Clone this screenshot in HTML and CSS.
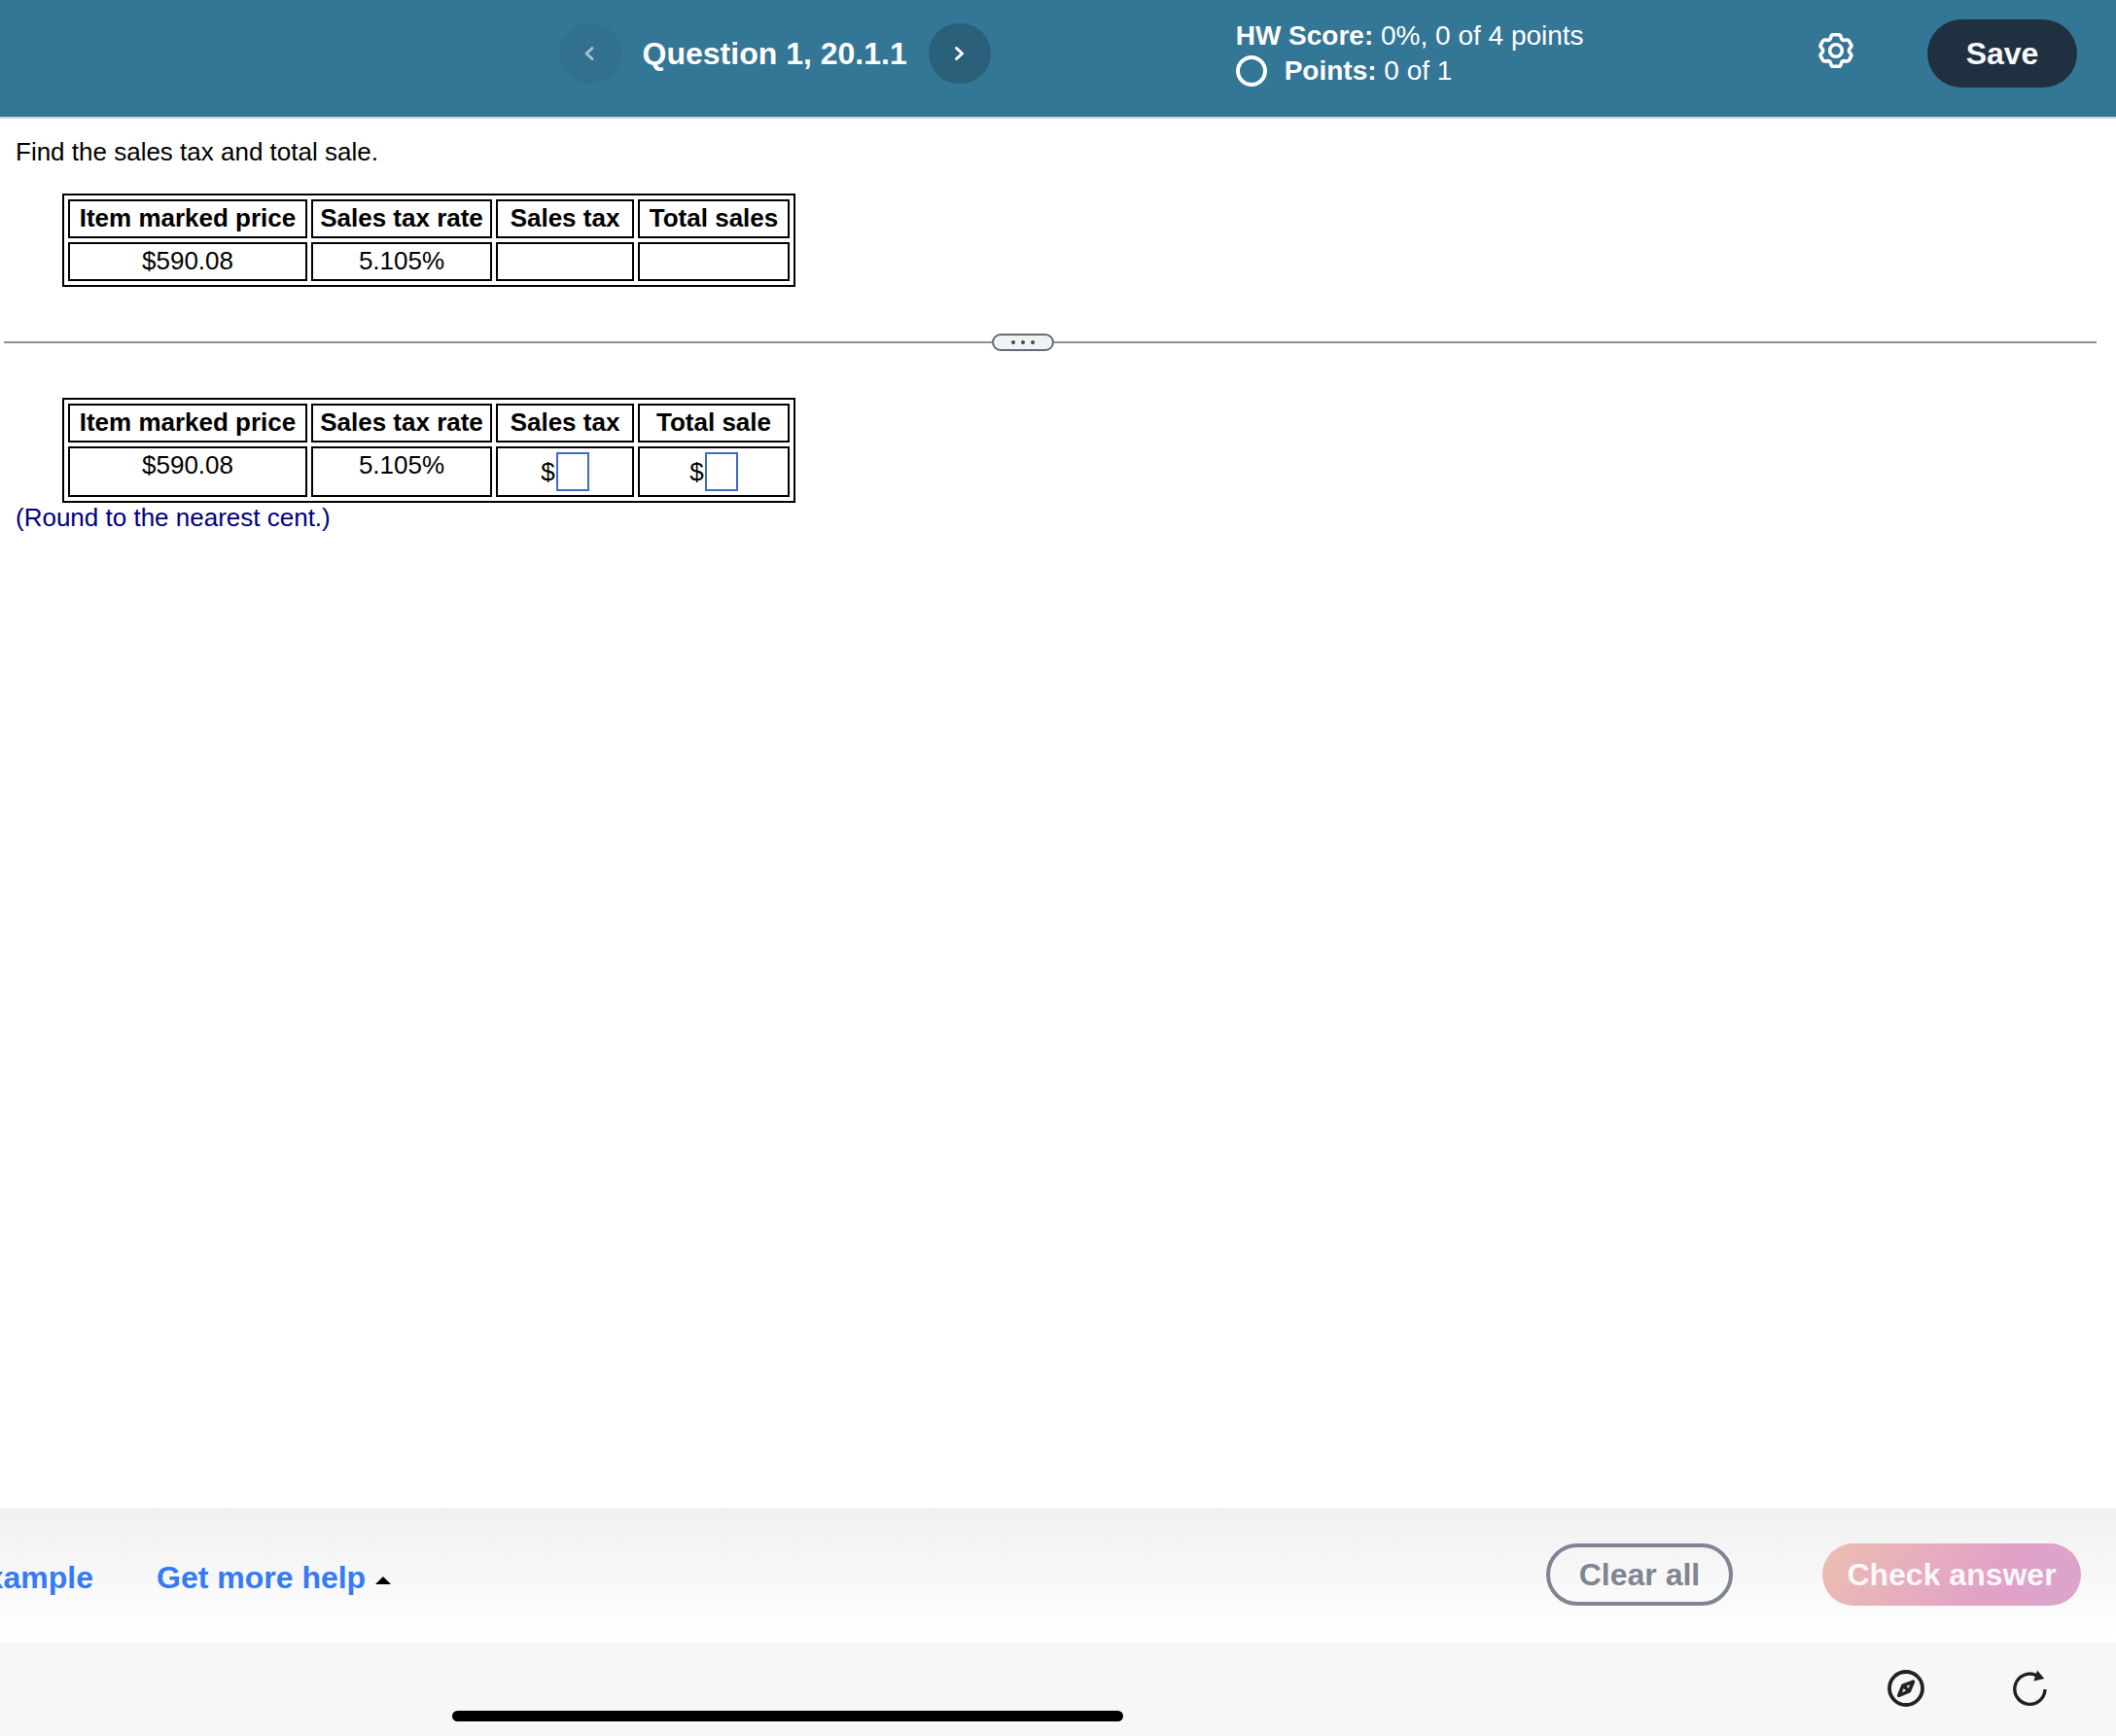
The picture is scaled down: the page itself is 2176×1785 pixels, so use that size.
FILE: index.html
```html
<!DOCTYPE html>
<html lang="en">
<head>
<meta charset="utf-8">
<title>Question 1, 20.1.1</title>
<link rel="stylesheet" href="styles.css">
</head>
<body>
<header class="topbar">
  <nav class="pager" aria-label="Questions">
    <button class="pager-btn" type="button" aria-label="Previous question" disabled>
      <svg width="14" height="18" viewBox="0 0 14 18"><path d="M9 3.500 3 9l6 5.500"/></svg>
    </button>
    <h1 class="title">Question 1, 20.1.1</h1>
    <button class="pager-btn" type="button" aria-label="Next question">
      <svg width="14" height="18" viewBox="0 0 14 18"><path d="M3.500 3.500 9.500 9l-6 5.500"/></svg>
    </button>
  </nav>
  <div class="score">
    <div><b>HW Score:</b> 0%, 0 of 4 points</div>
    <div class="points"><span class="ring"></span><span><b>Points:</b> 0 of 1</span></div>
  </div>
  <button class="icon-btn settings" type="button" aria-label="Settings">
    <svg width="36" height="36" viewBox="0 0 36 36" fill="none" stroke="#fff" stroke-width="3.600">
      <path d="M18 1.800H21Q22.600 1.800 23 3.500L23.600 5.400Q24.300 7.400 26.400 7.400L29 7Q30.600 6.800 31.400 8.200L33.600 12Q34.300 13.300 33.400 14.500L31.800 16.400Q31 18 31.800 19.600L33.400 21.500Q34.300 22.700 33.600 24L31.400 27.800Q30.600 29.200 29 29L26.400 28.600Q24.300 28.600 23.600 30.600L23 32.500Q22.600 34.200 21 34.200H15Q13.400 34.200 13 32.500L12.400 30.600Q11.700 28.600 9.600 28.600L7 29Q5.400 29.200 4.600 27.800L2.400 24Q1.700 22.700 2.600 21.500L4.200 19.600Q5 18 4.200 16.400L2.600 14.500Q1.700 13.300 2.400 12L4.600 8.200Q5.400 6.800 7 7L9.600 7.400Q11.700 7.400 12.400 5.400L13 3.500Q13.400 1.800 15 1.800Z"/>
      <circle cx="18" cy="18" r="6.300"/>
    </svg>
  </button>
  <button class="save" type="button">Save</button>
</header>

<main class="content">
  <p class="prompt">Find the sales tax and total sale.</p>
  <table class="grid">
    <colgroup><col class="col-price"><col class="col-rate"><col class="col-tax"><col class="col-total"></colgroup>
    <thead><tr><th scope="col">Item marked price</th><th scope="col">Sales tax rate</th><th scope="col">Sales tax</th><th scope="col">Total sales</th></tr></thead>
    <tbody><tr><td>$590.08</td><td>5.105%</td><td></td><td></td></tr></tbody>
  </table>

  <div class="divider">
    <span class="rule"></span>
    <button class="handle" type="button" aria-label="Resize panes"><i></i><i></i><i></i></button>
    <span class="rule"></span>
  </div>

  <table class="grid">
    <colgroup><col class="col-price"><col class="col-rate"><col class="col-tax"><col class="col-total"></colgroup>
    <thead><tr><th scope="col">Item marked price</th><th scope="col">Sales tax rate</th><th scope="col">Sales tax</th><th scope="col">Total sale</th></tr></thead>
    <tbody><tr>
      <td>$590.08</td>
      <td>5.105%</td>
      <td class="answer"><div class="field"><label for="tax">$</label><input id="tax" type="text" aria-label="Sales tax in dollars"></div></td>
      <td class="answer"><div class="field"><label for="total">$</label><input id="total" type="text" aria-label="Total sale in dollars"></div></td>
    </tr></tbody>
  </table>
  <p class="hint">(Round to the nearest cent.)</p>
</main>

<footer>
  <div class="actions">
    <a class="help-link example" href="#example"><span>example</span></a>
    <a class="help-link" href="#help">Get more help <svg width="16" height="8" viewBox="0 0 16 8"><path d="M0 8 8 0l8 8z"/></svg></a>
    <button class="pill clear" type="button">Clear all</button>
    <button class="pill check" type="button">Check answer</button>
  </div>
  <div class="browser-bar">
    <div class="home-indicator"></div>
    <button class="icon-btn" type="button" aria-label="Open in browser">
      <svg width="38" height="38" viewBox="0 0 38 38" fill="none" stroke="#222" stroke-width="3.800" stroke-linejoin="round">
        <circle cx="19" cy="19" r="17"/>
        <path stroke-width="3.600" d="M26.500 12.100 15.900 16.200 11.700 26.400 22.400 21.800ZM15.900 16.200 22.400 21.800"/>
      </svg>
    </button>
    <button class="icon-btn" type="button" aria-label="Reload">
      <svg width="38" height="38" viewBox="0 0 38 38">
        <path d="M34 20A15.600 15.600 0 1 1 25 5.600" fill="none" stroke="#222" stroke-width="3.400"/>
        <path d="M26 .500 33.300 9 22.300 11.600z" fill="#222"/>
      </svg>
    </button>
  </div>
</footer>
</body>
</html>
```

FILE: styles.css
```css
* {
  box-sizing: border-box;
}

body {
  margin: 0;
  min-height: 100vh;
  display: flex;
  flex-direction: column;
  background: #fff;
  color: #000;
  font: 26px/30px "Liberation Sans", Arial, sans-serif;
}

button {
  margin: 0;
  padding: 0;
  border: 0;
  font: inherit;
  cursor: pointer;
}

p {
  margin: 0;
}

svg {
  display: block;
}

/* Top bar */
.topbar {
  display: flex;
  align-items: center;
  padding: 19px 40px 29px 0;
  border-bottom: 2px solid #ccd2db;
  background: #347696;
  color: #fff;
}

.pager {
  display: flex;
  align-items: center;
  gap: 22px;
  margin-left: 26.9%;
}

.pager-btn {
  display: flex;
  align-items: center;
  justify-content: center;
  width: 64px;
  height: 62px;
  border-radius: 32px;
  background: #2a6079;
  color: #fff;
}

.pager-btn:disabled {
  background: #31708f;
  color: #a3c3d1;
}

.pager-btn path {
  fill: none;
  stroke: currentColor;
  stroke-width: 3;
  stroke-linecap: round;
  stroke-linejoin: round;
}

.title {
  margin: 0;
  font-size: 32px;
  line-height: 36px;
  white-space: nowrap;
}

.score {
  margin-left: 252px;
  font-size: 28px;
  line-height: 36px;
  white-space: nowrap;
}

.points {
  display: flex;
  align-items: center;
  gap: 18px;
}

.ring {
  width: 32px;
  height: 32px;
  border: 4px solid #fff;
  border-radius: 50%;
}

.icon-btn {
  background: none;
}

.settings {
  margin: 0 76px 6px auto;
}

.save {
  width: 154px;
  height: 70px;
  border-radius: 35px;
  background: #1f3041;
  color: #f7f8fd;
  font-size: 32px;
  font-weight: bold;
}

/* Question */
.content {
  flex: 1;
  padding-top: 19px;
}

.prompt,
.hint {
  padding-left: 16px;
}

.prompt {
  margin-bottom: 28px;
}

.hint {
  color: #000080;
}

.grid {
  width: 754px;
  margin-left: 64px;
  table-layout: fixed;
  border: 2px solid #000;
  border-collapse: separate;
  border-spacing: 4px;
  text-align: center;
}

.grid th,
.grid td {
  height: 40px;
  padding: 2px 0 4px;
  border: 2px solid #000;
  vertical-align: top;
}

.grid .answer {
  padding: 4px 0;
}

.col-price {
  width: 246px;
}

.col-rate {
  width: 186px;
}

.col-tax {
  width: 142px;
}

.col-total {
  width: 156px;
}

.field {
  display: flex;
  align-items: center;
  justify-content: center;
  gap: 1px;
}

.field input {
  width: 34px;
  height: 40px;
  padding: 0;
  border: 2px solid #4169c8;
  border-radius: 0;
  background: #fff;
  font: inherit;
}

.divider {
  display: grid;
  grid-template-columns: 1016fr 64px 1072fr;
  align-items: center;
  margin: 48px 20px 48px 4px;
}

.rule {
  height: 2px;
  background: #8b8fa3;
}

.handle {
  display: flex;
  align-items: center;
  justify-content: center;
  gap: 6px;
  height: 18px;
  border: 2px solid #626a7b;
  border-radius: 9px;
  background: #f1f2f4;
}

.handle i {
  width: 4px;
  height: 4px;
  border-radius: 50%;
  background: #484848;
}

/* Bottom bars */
.actions {
  display: flex;
  align-items: center;
  height: 138px;
  padding: 0 36px 2px 0;
  background: linear-gradient(#f0f0f0, #fff);
}

.help-link {
  display: flex;
  align-items: center;
  gap: 10px;
  margin-top: 6px;
  color: #357af6;
  font-size: 32px;
  font-weight: bold;
  line-height: 40px;
  text-decoration: none;
  white-space: nowrap;
}

.help-link svg {
  margin-top: 6px;
}

.example {
  justify-content: flex-end;
  width: 96px;
  margin-right: 65px;
  overflow: hidden;
}

.pill {
  height: 64px;
  border-radius: 32px;
  font-size: 32px;
  font-weight: bold;
}

.clear {
  width: 192px;
  margin-left: auto;
  margin-right: 92px;
  border: 4px solid #808593;
  background: transparent;
  color: #808593;
}

.check {
  width: 266px;
  background: linear-gradient(120deg, #ecbeb1, #e2a1c7 65%, #daa5cc);
  color: #f9f7fa;
}

.browser-bar {
  display: flex;
  align-items: flex-start;
  gap: 90px;
  height: 96px;
  padding: 28px 69px 0 0;
  background: #f7f7f7;
}

.home-indicator {
  width: 690px;
  height: 11px;
  margin: 42px auto 0 465px;
  border-radius: 6px;
  background: #000;
}
```
